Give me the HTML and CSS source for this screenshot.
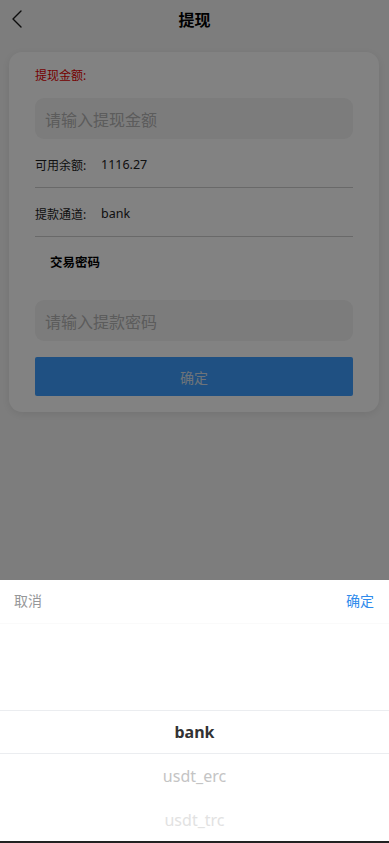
FILE: index.html
```html
<!DOCTYPE html>
<html lang="zh-CN">
<head>
<meta charset="utf-8">
<meta name="viewport" content="width=device-width, initial-scale=1">
<title>提现</title>
<link rel="stylesheet" href="styles.css">
</head>
<body>
<div class="page">
  <header class="nav">
    <span class="nav-back">
      <svg width="14" height="20" viewBox="0 0 14 20"><polyline points="10,2 2,10 10,18" fill="none" stroke="#1a1a1a" stroke-width="1.4" stroke-linecap="round" stroke-linejoin="round"/></svg>
    </span>
    <h1 class="nav-title">提现</h1>
  </header>

  <section class="card">
    <div class="label-red">提现金额:</div>
    <div class="field"><span class="placeholder">请输入提现金额</span></div>
    <div class="row"><span class="row-key">可用余额:</span><span class="row-val">1116.27</span></div>
    <div class="row"><span class="row-key">提款通道:</span><span class="row-val">bank</span></div>
    <div class="pwd-label">交易密码</div>
    <div class="field"><span class="placeholder">请输入提款密码</span></div>
    <button class="btn" type="button">确定</button>
  </section>
</div>

<div class="overlay"></div>

<div class="picker">
  <div class="picker-toolbar">
    <span class="picker-cancel">取消</span>
    <span class="picker-confirm">确定</span>
  </div>
  <div class="picker-columns">
    <div class="picker-item picker-item-active">bank</div>
    <div class="picker-item picker-item-2">usdt_erc</div>
    <div class="picker-item picker-item-3">usdt_trc</div>
  </div>
  <div class="bottom-bar"></div>
</div>
</body>
</html>
```

FILE: styles.css
```css
* { box-sizing: border-box; }

html, body {
  margin: 0;
  padding: 0;
}

body {
  background: #f6f6f6;
  font-family: "Noto Sans", "Noto Sans CJK SC", sans-serif;
  color: #222;
  min-height: 843px;
}

.nav {
  height: 40px;
  display: flex;
  align-items: center;
  justify-content: center;
  position: relative;
}

.nav-back {
  position: absolute;
  left: 11px;
  top: 9px;
  display: flex;
}

.nav-title {
  margin: 0;
  font-size: 16px;
  font-weight: 700;
  color: #000;
  line-height: 40px;
}

.card {
  margin: 12px 10px 0 9px;
  background: #fff;
  border-radius: 13px;
  box-shadow: 0 2px 10px rgba(0, 0, 0, 0.09);
  padding: 14px 26px 16px 26px;
  display: flex;
  flex-direction: column;
}

.label-red {
  color: #e60000;
  font-size: 12px;
  line-height: 20px;
  margin-bottom: 12px;
}

.field {
  height: 41px;
  background: #f3f3f3;
  border-radius: 9px;
  display: flex;
  align-items: center;
  padding-left: 10px;
}

.placeholder {
  color: #b4b4b4;
  font-size: 16px;
}

.row {
  height: 49px;
  display: flex;
  align-items: center;
  padding-top: 3px;
  border-bottom: 1px solid #cfcfcf;
  font-size: 12px;
}

.row-key {
  width: 66px;
  color: #222;
}

.row-val {
  font-size: 12.5px;
  color: #222;
}

.pwd-label {
  height: 48px;
  display: flex;
  align-items: center;
  padding-left: 15px;
  padding-top: 1px;
  font-size: 12.5px;
  font-weight: 700;
  color: #000;
  margin-bottom: 15px;
}

.field + .btn { margin-top: 16px; }

.btn {
  height: 39px;
  border: none;
  border-radius: 2px;
  background: #3e9dff;
  color: #d8e2ee;
  font-family: inherit;
  font-size: 14px;
}

.overlay {
  position: fixed;
  inset: 0;
  background: rgba(0, 0, 0, 0.49);
}

.picker {
  position: fixed;
  left: 0;
  right: 0;
  bottom: 0;
  height: 263px;
  background: #fff;
  display: flex;
  flex-direction: column;
}

.picker-toolbar {
  height: 44px;
  display: flex;
  align-items: center;
  justify-content: space-between;
  padding: 0 15px 3px 14px;
  font-size: 14px;
  border-bottom: 1px solid #fafafa;
}

.picker-cancel { color: #969799; }
.picker-confirm { color: #2f8bec; }

.picker-columns {
  flex: 1;
  padding-top: 86px;
  display: flex;
  flex-direction: column;
  overflow: hidden;
}

.picker-item {
  height: 44px;
  flex: none;
  display: flex;
  align-items: center;
  justify-content: center;
  font-size: 16px;
}

.picker-item-active {
  color: #323233;
  font-weight: 700;
  border-top: 1px solid #ebedf0;
  border-bottom: 1px solid #ebedf0;
}

.picker-item-2 { color: #c4c4c4; }
.picker-item-3 { color: #e2e2e2; }

.bottom-bar {
  height: 2px;
  background: #222;
  flex: none;
}
```
